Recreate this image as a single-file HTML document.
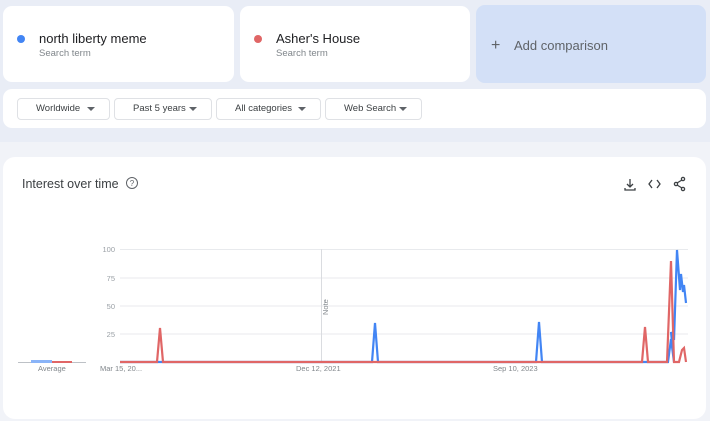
<!DOCTYPE html>
<html><head><style>
*{margin:0;padding:0;box-sizing:border-box}
body{width:710px;height:421px;background:#f1f3f8;font-family:"Liberation Sans",sans-serif;position:relative;overflow:hidden}
.top{position:absolute;left:0;top:0;width:710px;height:142px;background:#e9edf6}
.card{position:absolute;background:#fff;border-radius:9px}
.dot{position:absolute;width:8px;height:8px;border-radius:50%}
.t{position:absolute;font-size:13px;color:#202124}
.s{position:absolute;font-size:9.5px;color:#80868b}
.f{position:absolute;top:98px;height:22px;border:1px solid #dfe1e5;border-radius:4px;font-size:9.5px;color:#3c4043;line-height:20px;padding-left:18px}
.f:after{content:"";position:absolute;right:14px;top:8px;border-left:4px solid transparent;border-right:4px solid transparent;border-top:4px solid #5f6368}
.yl{position:absolute;font-size:7.5px;color:#9aa0a6;text-align:right;width:20px;left:95px}
.xl{position:absolute;font-size:7.5px;color:#80868b;top:364px}
</style></head><body>
<div class="top"></div>
<div class="card" style="left:3px;top:6px;width:231px;height:76px"></div>
<div class="dot" style="left:17px;top:35px;background:#4285f4"></div>
<div class="t" style="left:39px;top:31px">north liberty meme</div>
<div class="s" style="left:39px;top:48px">Search term</div>
<div class="card" style="left:240px;top:6px;width:230px;height:76px"></div>
<div class="dot" style="left:254px;top:35px;background:#e06666"></div>
<div class="t" style="left:276px;top:31px">Asher's House</div>
<div class="s" style="left:276px;top:48px">Search term</div>
<div class="card" style="left:476px;top:5px;width:230px;height:78px;background:#d3e0f7"></div>
<div class="t" style="left:491px;top:37px;color:#5f6368;font-size:16px">+</div>
<div class="t" style="left:514px;top:38px;color:#5f6368">Add comparison</div>
<div class="card" style="left:3px;top:89px;width:703px;height:39px"></div>
<div class="f" style="left:17px;width:93px">Worldwide</div>
<div class="f" style="left:114px;width:98px">Past 5 years</div>
<div class="f" style="left:216px;width:105px">All categories</div>
<div class="f" style="left:325px;width:97px">Web Search</div>
<div class="card" style="left:3px;top:157px;width:703px;height:262px;border-radius:12px"></div>
<div class="t" style="left:22px;top:177px;font-size:12.5px;color:#3c4043">Interest over time</div>
<div style="position:absolute;left:126px;top:177px;width:12px;height:12px;border:1px solid #5f6368;border-radius:50%;font-size:8px;color:#5f6368;text-align:center;line-height:11px">?</div>
<svg style="position:absolute;left:0;top:0" width="710" height="421">
<g stroke="#3c4043" stroke-width="1.3" fill="none">
<path d="M630 179v8M627 184l3 3 3-3M625 188v2h10v-2"/>
<path d="M652 180l-3 4 3 4M657 180l3 4-3 4"/>
<circle cx="683" cy="179" r="1.6"/><circle cx="676" cy="184" r="1.6"/><circle cx="683" cy="189" r="1.6"/>
<path d="M677 183l5-3M677 185l5 3"/>
</g>
<g stroke="#e8eaed" stroke-width="1">
<path d="M120 249.5H688M120 278H688M120 306H688M120 334H688"/>
</g>
<path d="M321.5 249V362" stroke="#dadce0"/>
<path d="M18 362.5H86" stroke="#bdc1c6"/>
<rect x="31" y="360" width="21" height="3" fill="#8ab4f8"/>
<rect x="52" y="361" width="20" height="2" fill="#e06666"/>
<path d="M120 362H372L375 323L378 362H536L539 322L542 362H668L671 339L674 362L671 332L674 340L677 250L680 290L681 274L683 292L684 285L686 303" stroke="#4285f4" stroke-width="2.2" fill="none"/>
<path d="M120 362H157L160 328L163 362H642L645 327L648 362H667L671 261L674 362H679L682 350L684 348L686 362" stroke="#e06666" stroke-width="2.2" fill="none"/>
<text x="328" y="315" font-size="7.5" fill="#80868b" transform="rotate(-90 328 315)" font-family="Liberation Sans">Note</text>
</svg>
<div class="yl" style="top:245px">100</div>
<div class="yl" style="top:274px">75</div>
<div class="yl" style="top:302px">50</div>
<div class="yl" style="top:330px">25</div>
<div class="xl" style="left:38px">Average</div>
<div class="xl" style="left:100px">Mar 15, 20...</div>
<div class="xl" style="left:296px">Dec 12, 2021</div>
<div class="xl" style="left:493px">Sep 10, 2023</div>
</body></html>
